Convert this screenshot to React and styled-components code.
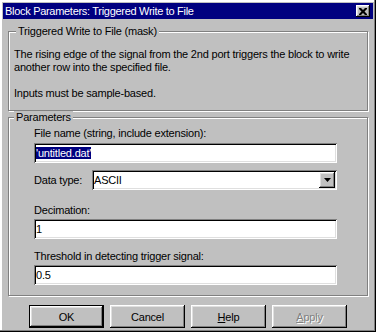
import styled, { createGlobalStyle } from "styled-components";

const GlobalStyle = createGlobalStyle`
  body {
    margin: 0;
    background: #ffffff;
  }
  * {
    box-sizing: border-box;
  }
`;

const raised = `
  background: #c0c0c0;
  box-shadow: inset -1px -1px 0 #000000, inset 1px 1px 0 #ffffff,
    inset -2px -2px 0 #808080, inset 2px 2px 0 #dfdfdf;
`;

const sunken = `
  background: #ffffff;
  box-shadow: inset 1px 1px 0 #808080, inset -1px -1px 0 #ffffff,
    inset 2px 2px 0 #000000, inset -2px -2px 0 #dfdfdf;
`;

const Window = styled.div`
  width: 376px;
  height: 332px;
  padding: 3px;
  background: #c0c0c0;
  box-shadow: inset -1px -1px 0 #000000, inset -2px -2px 0 #808080,
    inset 2px 2px 0 #ffffff;
  font-family: "Liberation Sans", Arial, sans-serif;
  font-size: 11px;
  letter-spacing: -0.2px;
  color: #000000;
  display: flex;
  flex-direction: column;
`;

const TitleBar = styled.div`
  height: 16px;
  background: #000080;
  color: #ffffff;
  font-size: 11px;
  letter-spacing: -0.3px;
  padding: 0 3px 0 2px;
  display: flex;
  align-items: center;
  justify-content: space-between;
  white-space: nowrap;
`;

const CloseButton = styled.div`
  width: 14px;
  height: 12px;
  ${raised}
  display: flex;
  align-items: center;
  justify-content: center;
`;

const Group = styled.fieldset`
  margin: ${(p) => p.$top}px 5px 0;
  padding: ${(p) => p.$pad};
  min-width: 0;
  border: 1px solid #808080;
  box-shadow: inset 1px 1px 0 #ffffff, 1px 1px 0 #ffffff;
`;

const Legend = styled.legend`
  margin-left: ${(p) => p.$shift}px;
  padding: 0 2px;
  line-height: 13px;
  background: #c0c0c0;
`;

const Para = styled.div`
  line-height: 13px;
  white-space: pre-line;
`;

const Label = styled.div`
  line-height: 13px;
  margin-top: ${(p) => p.$top || 0}px;
  margin-bottom: ${(p) => p.$bottom ?? 2}px;
`;

const TextBox = styled.div`
  ${sunken}
  height: 20px;
  padding: 0 2px;
  display: flex;
  align-items: center;
  white-space: nowrap;
`;

const Selected = styled.span`
  background: #000080;
  color: #ffffff;
`;

const Row = styled.div`
  display: flex;
  align-items: center;
  margin-top: 7px;
`;

const RowLabel = styled.div`
  width: 58px;
`;

const Select = styled(TextBox)`
  flex: 1;
  justify-content: space-between;
  padding: 2px 2px 2px 2px;
`;

const DropButton = styled.div`
  width: 16px;
  height: 16px;
  ${raised}
  display: flex;
  align-items: center;
  justify-content: center;
`;

const ButtonRow = styled.div`
  display: flex;
  gap: 6px;
  margin-top: 9px;
  padding-left: 26px;
`;

const Button = styled.div`
  width: 75px;
  height: 23px;
  ${raised}
  ${(p) =>
    p.$default &&
    `box-shadow: inset 0 0 0 1px #000000, inset -2px -2px 0 #000000, inset 2px 2px 0 #ffffff,
      inset -3px -3px 0 #808080, inset 3px 3px 0 #dfdfdf;`}
  color: ${(p) => (p.$disabled ? "#808080" : "#000000")};
  text-shadow: ${(p) => (p.$disabled ? "1px 1px 0 #ffffff" : "none")};
  display: flex;
  align-items: center;
  justify-content: center;
`;

const Key = styled.span`
  text-decoration: underline;
`;

export default function App() {
  return (
    <>
      <GlobalStyle />
      <Window>
        <TitleBar>
          <span>Block Parameters: Triggered Write to File</span>
          <CloseButton>
            <svg width="8" height="7" viewBox="0 0 8 7">
              <path
                d="M0 0h2l2 2 2-2h2v1L5.5 3.5 8 6v1H6L4 5 2 7H0V6l2.5-2.5L0 1z"
                fill="#000"
              />
            </svg>
          </CloseButton>
        </TitleBar>
        <Group $top={6} $pad="10px 5px 10px 5px">
          <Legend $shift={2}>Triggered Write to File (mask)</Legend>
          <Para>
            {"The rising edge of the signal from the 2nd port triggers the block to write\nanother row into the specified file.\n\nInputs must be sample-based."}
          </Para>
        </Group>
        <Group $top={0} $pad="3px 30px 10px 25px">
          <Legend $shift={-20}>Parameters</Legend>
          <Label $bottom={3}>File name (string, include extension):</Label>
          <TextBox>
            <Selected>'untitled.dat'</Selected>
          </TextBox>
          <Row>
            <RowLabel>Data type:</RowLabel>
            <Select>
              <span>ASCII</span>
              <DropButton>
                <svg width="7" height="4" viewBox="0 0 7 4">
                  <path d="M0 0h7L3.5 4z" fill="#000" />
                </svg>
              </DropButton>
            </Select>
          </Row>
          <Label $top={14} $bottom={2}>Decimation:</Label>
          <TextBox>1</TextBox>
          <Label $top={11} $bottom={2}>Threshold in detecting trigger signal:</Label>
          <TextBox>0.5</TextBox>
        </Group>
        <ButtonRow>
          <Button $default>OK</Button>
          <Button>Cancel</Button>
          <Button>
            <span>
              <Key>H</Key>elp
            </span>
          </Button>
          <Button $disabled>
            <span>
              <Key>A</Key>pply
            </span>
          </Button>
        </ButtonRow>
      </Window>
    </>
  );
}
